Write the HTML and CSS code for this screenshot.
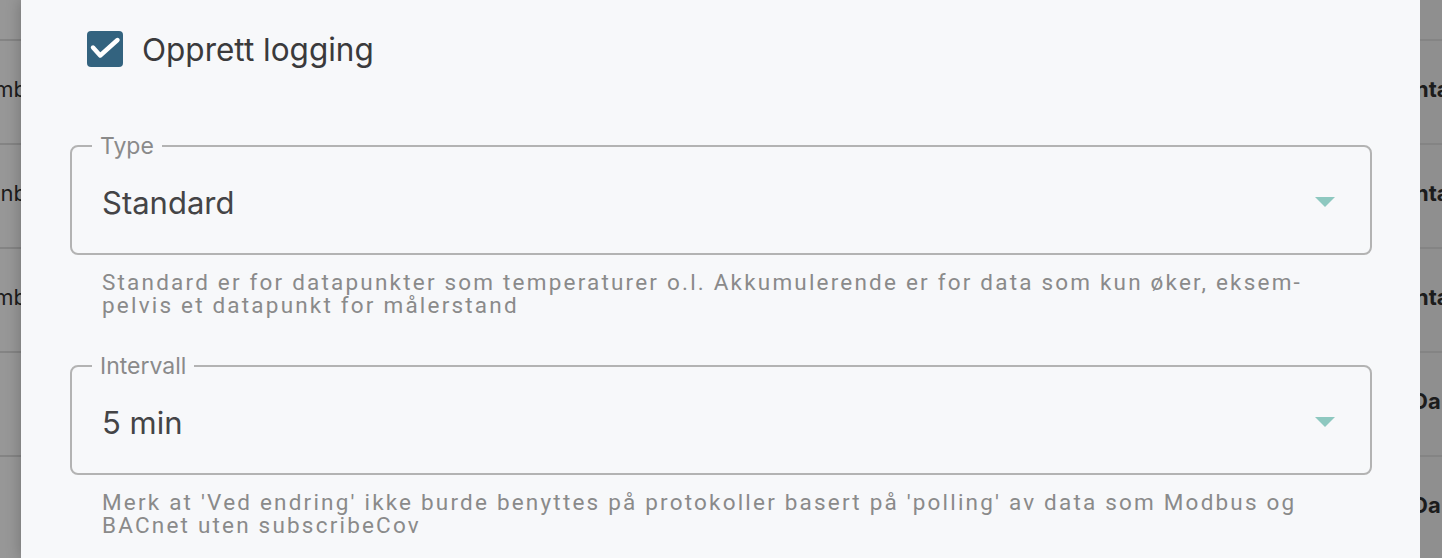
FILE: index.html
```html
<!DOCTYPE html>
<html lang="no">

<head>
  <title>Opprett logging</title>
  <meta charset="utf-8" />
  <meta name="viewport" content="width=device-width, initial-scale=1" />
  <link rel="stylesheet" href="styles.css">
</head>

<body>
  <div class="backdrop backdrop-left">
    <div class="row row-head"></div>
    <div class="row"><span class="cell-left">mb</span></div>
    <div class="row"><span class="cell-left">nb</span></div>
    <div class="row"><span class="cell-left">mb</span></div>
    <div class="row"></div>
    <div class="row"></div>
  </div>

  <div id="dialog">
    <label class="check-row">
      <span class="checkbox">
        <svg width="36" height="36" viewBox="0 0 36 36">
          <polyline points="6,16.5 13.2,24.5 30.5,9" fill="none" stroke="#ffffff" stroke-width="4.4" stroke-linecap="round" stroke-linejoin="round" />
        </svg>
      </span>
      <span class="check-label">Opprett logging</span>
    </label>

    <fieldset class="field">
      <legend>Type</legend>
      <div class="select-value">
        <span>Standard</span>
        <svg class="arrow" width="20" height="10" viewBox="0 0 20 10">
          <polygon points="0,0 20,0 10,10" fill="#8ec8c0" />
        </svg>
      </div>
    </fieldset>
    <p class="helper">Standard er for datapunkter som temperaturer o.l. Akkumulerende er for data som kun øker, eksem&shy;pelvis et datapunkt for målerstand</p>

    <fieldset class="field field-next">
      <legend>Intervall</legend>
      <div class="select-value">
        <span>5 min</span>
        <svg class="arrow" width="20" height="10" viewBox="0 0 20 10">
          <polygon points="0,0 20,0 10,10" fill="#8ec8c0" />
        </svg>
      </div>
    </fieldset>
    <p class="helper">Merk at 'Ved endring' ikke burde benyttes på protokoller basert på 'polling' av data som Modbus og BACnet uten subscribeCov</p>
  </div>

  <div class="backdrop backdrop-right">
    <div class="row row-head"></div>
    <div class="row"><span class="cell-right">nta</span></div>
    <div class="row"><span class="cell-right">nta</span></div>
    <div class="row"><span class="cell-right">nta</span></div>
    <div class="row"><span class="cell-right cell-d">Da</span></div>
    <div class="row"><span class="cell-right cell-d">Da</span></div>
  </div>
</body>

</html>
```

FILE: styles.css
```css
html,
body {
  margin: 0;
  padding: 0;
  height: 558px;
  overflow: hidden;
  background-color: #939393;
}

body {
  display: flex;
  flex-direction: row;
  font-family: Inter, "Liberation Sans", sans-serif;
}

/* dimmed table behind the dialog */
.backdrop {
  display: flex;
  flex-direction: column;
  overflow: hidden;
  color: #1c1c1c;
  font-size: 22px;
}

.backdrop-left {
  width: 21px;
  background-color: #979797;
}

.backdrop-right {
  width: 22px;
  background-color: #8f8f8f;
}

.row {
  display: flex;
  align-items: center;
  height: 104px;
  border-bottom: 2px solid #848484;
  white-space: nowrap;
  padding-bottom: 6px;
  box-sizing: border-box;
  flex-shrink: 0;
}

.row-head {
  height: 41px;
}

.backdrop-left .row {
  justify-content: flex-end;
}

.cell-left {
  margin-right: -6px;
}

.cell-right {
  font-weight: bold;
  margin-left: -5px;
}

.cell-d {
  margin-left: -8px;
}

/* dialog */
#dialog {
  flex: 1;
  background-color: #f7f8fa;
  padding: 31px 48px 0 49px;
  box-shadow: 0 0 14px rgba(0, 0, 0, 0.25);
  min-width: 0;
}

.check-row {
  display: flex;
  align-items: center;
  height: 36px;
  margin-left: 17px;
}

.checkbox {
  display: flex;
  width: 36px;
  height: 36px;
  border-radius: 4px;
  background-color: #33637f;
}

.check-label {
  margin-left: 19px;
  font-size: 31.5px;
  color: #3a3a3c;
}

.field {
  margin: 67px 0 0 0;
  padding: 0 30px 7px 30px;
  border: 2px solid #b3b3b3;
  border-radius: 8px;
  min-width: 0;
}

.field-next {
  margin-top: 37px;
}

.field legend {
  margin-left: -10px;
  padding: 0 8px;
  font-size: 23px;
  line-height: 24px;
  color: #8a8a8a;
}

.select-value {
  display: flex;
  align-items: center;
  justify-content: space-between;
  height: 88px;
  font-size: 31px;
  color: #444446;
}

.arrow {
  margin-right: 5px;
}

.helper {
  margin: 16px 32px 0 32px;
  font-family: Roboto, "Liberation Sans", sans-serif;
  font-size: 22.5px;
  line-height: 23px;
  letter-spacing: 2.2px;
  color: #8a8a8a;
}
```
